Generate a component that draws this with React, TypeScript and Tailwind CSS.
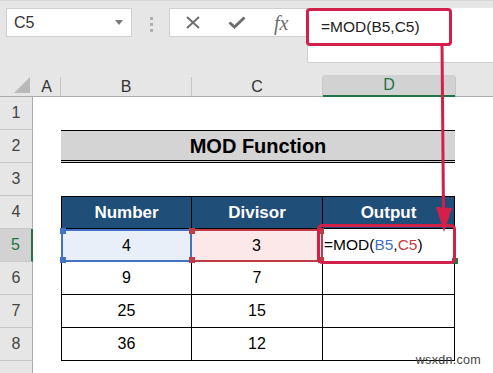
import React from 'react';

const cellFont = { fontFamily: '"Liberation Sans", Arial, sans-serif' };

const RowHead = ({ n, active = false }: { n?: number; active?: boolean }) => (
  <div
    className={`w-[33px] h-[33px] shrink-0 flex items-center justify-center border-b border-[#c8c8c8] text-[16px] ${
      active
        ? 'bg-[#d2d2d2] text-[#217346] border-r-2 border-r-[#217346]'
        : 'bg-[#e6e6e6] text-[#444] border-r border-r-[#ababab]'
    }`}
  >
    {n}
  </div>
);

const Handle = ({ pos, color }: { pos: string; color: string }) => (
  <span className={`absolute w-[6px] h-[6px] ${pos} ${color}`} />
);

const App = () => {
  const data = [
    { n: 6, b: '9', c: '7' },
    { n: 7, b: '25', c: '15' },
    { n: 8, b: '36', c: '12' },
  ];

  return (
    <div className="relative w-[493px] h-[373px] overflow-hidden bg-white" style={cellFont}>
      {/* Formula bar area */}
      <div className="h-[75px] bg-[#e6e6e6] border-t border-[#d6d6d6] flex items-start">
        <div className="mt-[7px] ml-[6px] w-[126px] h-[29px] bg-white border border-[#d0d0d0] flex items-center justify-between pl-[7px] pr-[8px]">
          <span className="text-[16px] text-[#333]">C5</span>
          <svg width="8" height="5" viewBox="0 0 8 5">
            <polygon points="0,0 8,0 4,5" fill="#7a7a7a" />
          </svg>
        </div>
        <div className="ml-[18px] mt-[16px] flex flex-col gap-[3px]">
          <span className="w-[3px] h-[3px] bg-[#b0b0b0]" />
          <span className="w-[3px] h-[3px] bg-[#b0b0b0]" />
          <span className="w-[3px] h-[3px] bg-[#b0b0b0]" />
        </div>
        <div className="ml-[16px] mt-[7px] w-[138px] h-[29px] bg-white border border-[#d0d0d0] flex items-center">
          <svg className="ml-[16px]" width="14" height="13" viewBox="0 0 14 13">
            <path d="M1 1 L13 12 M13 1 L1 12" stroke="#6e6e6e" strokeWidth="2" />
          </svg>
          <svg className="ml-[28px]" width="18" height="13" viewBox="0 0 18 13">
            <path d="M1.5 6.5 L6.5 11 L16.5 1.5" stroke="#6e6e6e" strokeWidth="3" fill="none" />
          </svg>
          <span
            className="ml-[28px] text-[20px] italic text-[#6e6e6e] leading-none"
            style={{ fontFamily: '"Liberation Serif", "Times New Roman", serif' }}
          >
            fx
          </span>
        </div>
        <div className="mt-[7px] flex-1 h-[55px] bg-white border-l border-b border-[#d0d0d0]">
          <div className="w-[146px] h-[38px] border-[3px] border-[#d3204a] rounded-[4px] flex items-center pl-[12px] -ml-[2px]">
            <span className="text-[15.5px] text-[#222]">=MOD(B5,C5)</span>
          </div>
        </div>
      </div>

      {/* Column headers */}
      <div className="flex h-[22px] bg-[#e6e6e6] border-b border-[#ababab] text-[16px] text-[#333]">
        <div className="w-[33px] shrink-0 flex items-end justify-end pr-[3px] pb-[3px]">
          <svg width="16" height="16" viewBox="0 0 16 16">
            <polygon points="16,0 16,16 0,16" fill="#b9b9b9" />
          </svg>
        </div>
        <div className="w-[28px] shrink-0 flex items-center justify-center border-r border-[#c6c6c6] mt-[2px]">A</div>
        <div className="w-[131px] shrink-0 flex items-center justify-center border-r border-[#c6c6c6] mt-[2px]">B</div>
        <div className="w-[131px] shrink-0 flex items-center justify-center border-r border-[#c6c6c6] mt-[2px]">C</div>
        <div className="w-[132px] shrink-0 flex items-center justify-center bg-[#d2d2d2] border-b-2 border-[#217346] text-[#217346] -mb-[1px]">D</div>
        <div className="flex-1 border-l border-[#c6c6c6] mt-[2px]" />
      </div>

      {/* Rows */}
      <div className="flex flex-col text-[16px] text-black">
        <div className="flex">
          <RowHead n={1} />
        </div>
        <div className="flex">
          <RowHead n={2} />
          <div className="w-[28px] shrink-0" />
          <div
            className="w-[394px] h-[33px] shrink-0 bg-[#d4d4d4] border-t border-black border-b-[3px] border-b-black border-double flex items-center justify-center text-[20px] font-bold"
            style={{ borderBottomStyle: 'double', borderTopStyle: 'solid' }}
          >
            MOD Function
          </div>
        </div>
        <div className="flex">
          <RowHead n={3} />
        </div>
        <div className="flex">
          <RowHead n={4} />
          <div className="w-[28px] shrink-0" />
          <div className="w-[131px] h-[33px] shrink-0 bg-[#1f4e79] border border-black flex items-center justify-center text-white font-bold text-[17px]">Number</div>
          <div className="w-[131px] h-[33px] shrink-0 bg-[#1f4e79] border-y border-r border-black flex items-center justify-center text-white font-bold text-[17px]">Divisor</div>
          <div className="w-[132px] h-[33px] shrink-0 bg-[#1f4e79] border-y border-r border-black flex items-center justify-center text-white font-bold text-[17px]">Output</div>
        </div>
        <div className="flex">
          <RowHead n={5} active />
          <div className="w-[28px] shrink-0" />
          <div className="relative w-[131px] h-[33px] shrink-0 bg-[#e9eff8] border-2 border-[#4472c4] flex items-center justify-center">
            4
            <Handle pos="-left-[3px] -top-[3px]" color="bg-[#4472c4]" />
            <Handle pos="-left-[3px] -bottom-[3px]" color="bg-[#4472c4]" />
          </div>
          <div className="relative w-[131px] h-[33px] shrink-0 bg-[#fce8e9] border-2 border-l-0 border-[#be3c46] flex items-center justify-center">
            3
            <Handle pos="-left-[3px] -top-[3px]" color="bg-[#be3c46]" />
            <Handle pos="-left-[3px] -bottom-[3px]" color="bg-[#be3c46]" />
            <Handle pos="-right-[3px] -top-[3px]" color="bg-[#be3c46]" />
            <Handle pos="-right-[3px] -bottom-[3px]" color="bg-[#be3c46]" />
          </div>
          <div className="relative w-[132px] h-[33px] shrink-0 border-r border-b border-black flex items-center pl-[1px]">
            <span className="text-[15.5px]">
              =MOD(<span className="text-[#4472c4]">B5</span>,<span className="text-[#be3c46]">C5</span>)
            </span>
            <span className="absolute -right-[4px] -bottom-[3px] w-[6px] h-[6px] bg-[#217346]" />
            <span className="absolute -left-[6px] -top-[5px] -right-[2px] -bottom-[3px] border-[3px] border-[#d3204a] rounded-[5px]" />
          </div>
        </div>
        {data.map((r) => (
          <div className="flex" key={r.n}>
            <RowHead n={r.n} />
            <div className="w-[28px] shrink-0" />
            <div className="w-[131px] h-[33px] shrink-0 border-x border-b border-black flex items-center justify-center">{r.b}</div>
            <div className="w-[131px] h-[33px] shrink-0 border-r border-b border-black flex items-center justify-center">{r.c}</div>
            <div className="w-[132px] h-[33px] shrink-0 border-r border-b border-black" />
          </div>
        ))}
        <div className="flex">
          <RowHead />
        </div>
      </div>

      {/* Arrow from formula bar to D5 */}
      <svg className="absolute left-0 top-0 pointer-events-none" width="493" height="373" viewBox="0 0 493 373">
        <line x1="442" y1="44" x2="443.5" y2="212" stroke="#d3204a" strokeWidth="3" />
        <polygon points="436,207 452,208 444,232" fill="#d3204a" />
      </svg>

      <span className="absolute right-[12px] bottom-[3px] text-[12.5px] text-[#444] tracking-[0.3px]">wsxdn.com</span>
    </div>
  );
};

export default App;
